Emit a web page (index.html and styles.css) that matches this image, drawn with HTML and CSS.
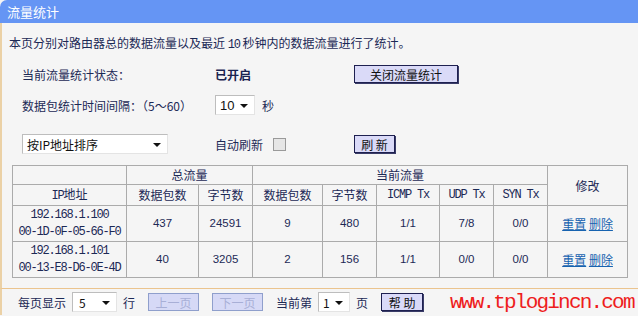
FILE: index.html
```html
<!DOCTYPE html>
<html lang="zh-CN">
<head>
  <meta charset="UTF-8">
  <title>流量统计</title>
  <link rel="stylesheet" href="styles.css">
</head>
<body>
  <div class="panel">
    <div class="title">流量统计</div>
    <div class="main">
      <p class="intro">本页分别对路由器总的数据流量以及最近 <span class="num">10</span> 秒钟内的数据流量进行了统计。</p>

      <div class="row row-status">
        <span>当前流量统计状态：</span>
        <b class="state">已开启</b>
        <button class="btn btn-wide">关闭流量统计</button>
      </div>

      <div class="row row-interval">
        <span>数据包统计时间间隔：（5～60）</span>
        <span class="pair">
          <span class="select sel-interval">10<i class="arrow"></i></span>
          <span>秒</span>
        </span>
      </div>

      <div class="row row-sort">
        <span class="select sel-sort">按IP地址排序<i class="arrow"></i></span>
        <span class="pair">
          <span>自动刷新</span>
          <span class="check"></span>
        </span>
        <button class="btn btn-small">刷 新</button>
      </div>

      <table class="stats">
        <colgroup>
          <col style="width:114px"><col style="width:72px"><col style="width:54px">
          <col style="width:70px"><col style="width:54px"><col style="width:63px">
          <col style="width:54px"><col style="width:54px"><col style="width:80px">
        </colgroup>
        <tr class="head">
          <td></td>
          <td colspan="2">总流量</td>
          <td colspan="5">当前流量</td>
          <td rowspan="2">修改</td>
        </tr>
        <tr class="head">
          <td><span class="mono">IP</span>地址</td>
          <td>数据包数</td>
          <td>字节数</td>
          <td>数据包数</td>
          <td>字节数</td>
          <td class="mono">ICMP Tx</td>
          <td class="mono">UDP Tx</td>
          <td class="mono">SYN Tx</td>
        </tr>
        <tr class="data">
          <td class="mono">192.168.1.100<br>00-1D-0F-05-66-F0</td>
          <td class="num">437</td>
          <td class="num">24591</td>
          <td class="num">9</td>
          <td class="num">480</td>
          <td class="num">1/1</td>
          <td class="num">7/8</td>
          <td class="num">0/0</td>
          <td><a href="#">重置</a> <a href="#">删除</a></td>
        </tr>
        <tr class="data">
          <td class="mono">192.168.1.101<br>00-13-E8-D6-0E-4D</td>
          <td class="num">40</td>
          <td class="num">3205</td>
          <td class="num">2</td>
          <td class="num">156</td>
          <td class="num">1/1</td>
          <td class="num">0/0</td>
          <td class="num">0/0</td>
          <td><a href="#">重置</a> <a href="#">删除</a></td>
        </tr>
      </table>
    </div>

    <div class="footer">
      <span>每页显示</span>
      <span class="select sel-rows">5<i class="arrow"></i></span>
      <span>行</span>
      <button class="btn btn-off">上一页</button>
      <button class="btn btn-off">下一页</button>
      <span class="wide">当前第</span>
      <span class="select sel-page">1<i class="arrow"></i></span>
      <span>页</span>
      <button class="btn btn-help">帮 助</button>
      <span class="mark">www.tplogincn.com</span>
    </div>
  </div>
</body>
</html>
```

FILE: styles.css
```css
body {
  margin: 0;
  background: #ffffff;
  font-family: "Noto Sans CJK SC", sans-serif;
  font-size: 12px;
  color: #1c2955;
}
.panel {
  width: 638px;
  height: 316px;
  overflow: hidden;
  background: #f5f5f5;
}
.title {
  height: 23px;
  line-height: 23px;
  padding-left: 7px;
  background: #6595f4;
  color: #ffffff;
  font-size: 13px;
  border-top-left-radius: 7px;
}
.main {
  border-left: 2px solid #ebd1a6;
  padding: 10px 0 10px 7px;
}
.intro {
  margin: 0;
  line-height: 20px;
}
.intro .num {
  font-family: "Liberation Mono", monospace;
  font-size: 12px;
  letter-spacing: -1.1px;
}
.row {
  display: grid;
  grid-template-columns: 193px 139px auto;
  align-items: center;
  height: 20px;
  margin-left: 13px;
}
.row-status { margin-top: 9px; }
.row-interval { margin-top: 11px; }
.row-sort { margin-top: 19px; }
.state {
  font-weight: bold;
  color: #1a2350;
}
.pair {
  display: flex;
  align-items: center;
  gap: 7px;
}
.btn {
  font-family: "Noto Sans CJK SC", sans-serif;
  font-size: 12px;
  color: #111111;
  background: #dadaf8;
  border: 1px solid #1e2050;
  box-shadow: 1px 1px 0 #3a3c68;
  padding: 0;
  line-height: 15px;
  height: 18px;
}
.btn-wide { width: 104px; justify-self: start; }
.btn-small { width: 41px; justify-self: start; }
.select {
  position: relative;
  display: inline-block;
  height: 19px;
  line-height: 19px;
  padding-left: 4px;
  background: #ffffff;
  border-top: 1px solid #bdbdbd;
  border-left: 1px solid #bdbdbd;
  border-right: 1px solid #e4e4e4;
  border-bottom: 1px solid #e4e4e4;
  box-sizing: border-box;
  color: #111111;
}
.select .arrow {
  position: absolute;
  right: 6px;
  top: 8px;
  border-left: 4px solid transparent;
  border-right: 4px solid transparent;
  border-top: 4px solid #111111;
}
.sel-interval {
  width: 40px;
  height: 20px;
  font-family: "Liberation Sans", sans-serif;
  font-size: 13px;
}
.sel-sort {
  width: 146px;
  height: 20px;
  line-height: 20px;
}
.check {
  width: 11px;
  height: 11px;
  border: 1px solid #9a9a9a;
  background: #e6e6e6;
  margin-left: 3px;
}
.stats {
  border-collapse: collapse;
  table-layout: fixed;
  width: 616px;
  margin: 11px 0 0 3px;
}
.stats td {
  border: 1px solid #ababab;
  text-align: center;
  padding: 0;
}
.stats .head td { height: 18px; line-height: 18px; }
.stats .data td { height: 35px; line-height: 17px; }
.mono {
  font-family: "Liberation Mono", monospace;
  font-size: 12px;
  letter-spacing: -1.2px;
}
.stats .num {
  font-family: "Liberation Sans", sans-serif;
  font-size: 11.5px;
}
.stats a {
  color: #1763b0;
  text-decoration: underline;
}
.footer {
  display: flex;
  align-items: center;
  gap: 6px;
  height: 26px;
  padding-left: 16px;
  border-left: 2px solid #ebd1a6;
  border-top: 1px solid #ebc48e;
}
.sel-rows { width: 45px; height: 20px; padding-left: 6px; }
.sel-page { width: 32px; height: 20px; }
.btn-off {
  width: 51px;
  margin-left: 7px;
  color: #a8afd6;
  background: #d6d9f6;
  border: 1px solid #8f9fcc;
  box-shadow: none;
}
.wide { margin-left: 7px; }
.btn-help { width: 42px; margin-left: 7px; }
.mark {
  margin-left: 21px;
  font-family: "Liberation Mono", monospace;
  font-size: 21px;
  letter-spacing: -1.8px;
  color: #ee1d1d;
  white-space: nowrap;
}
```
